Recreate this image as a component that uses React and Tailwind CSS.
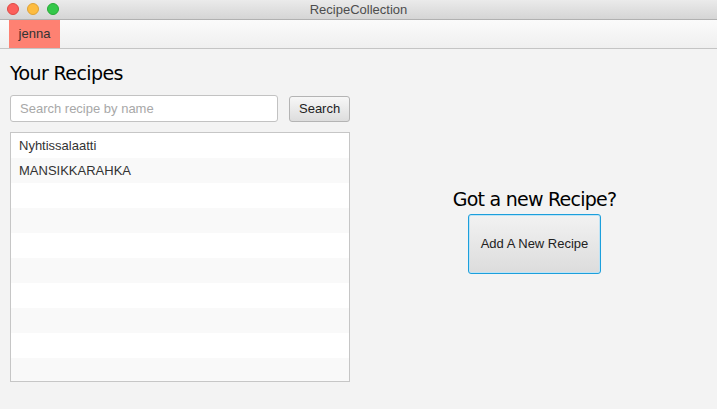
import React from 'react';

const recipes = ['Nyhtissalaatti', 'MANSIKKARAHKA'];

export default function App() {
  const rows = Array.from({ length: 10 }, (_, i) => recipes[i] || '');

  return (
    <div className="w-[717px] h-[409px] bg-[#f3f3f3] flex flex-col overflow-hidden font-['Liberation_Sans',Arial,sans-serif]">
      {/* Title bar */}
      <div className="relative h-[20px] flex items-center justify-center bg-gradient-to-b from-[#ebebeb] to-[#d5d5d5] border-b border-[#b1b1b1]">
        <div className="absolute left-[7px] top-[3px] flex gap-[8px]">
          <span className="w-[12px] h-[12px] rounded-full bg-[#fc605c] border border-[#de4a44]" />
          <span className="w-[12px] h-[12px] rounded-full bg-[#fdbc40] border border-[#dea236]" />
          <span className="w-[12px] h-[12px] rounded-full bg-[#34c84a] border border-[#27aa36]" />
        </div>
        <span className="text-[13px] text-[#4d4d4d] leading-none">RecipeCollection</span>
      </div>

      {/* Menu bar */}
      <div className="h-[29px] flex bg-gradient-to-b from-[#fbfbfb] to-[#efefef] border-b border-[#c4c4c4] pl-[9px]">
        <div className="w-[51px] bg-[#fe8172] flex items-center justify-center text-[13px] text-[#333]">jenna</div>
      </div>

      {/* Content */}
      <div className="flex-1 flex">
        <div className="w-[350px] pl-[10px] pt-[12px] flex flex-col">
          <h1 className="text-[19px] leading-[24px] text-black font-['DejaVu_Sans',sans-serif] tracking-[-0.6px]">Your Recipes</h1>
          <div className="flex items-center mt-[10px] gap-[11px]">
            <input
              type="text"
              placeholder="Search recipe by name"
              className="w-[269px] h-[27px] px-[9px] bg-white border border-[#c2c2c2] rounded-[3px] text-[13px] text-[#333] placeholder:text-[#a8a8a8] outline-none"
            />
            <button className="w-[61px] h-[26px] rounded-[3px] border border-[#b4b4b4] bg-gradient-to-b from-[#f7f7f7] to-[#dddddd] text-[13px] text-[#222]">
              Search
            </button>
          </div>
          <div className="mt-[10px] w-[340px] h-[250px] border border-[#c6c6c6] bg-white overflow-hidden flex flex-col">
            {rows.map((r, i) => (
              <div
                key={i}
                className={`h-[25px] shrink-0 flex items-center pl-[8px] text-[13px] text-[#333] ${i % 2 === 1 ? 'bg-[#f9f9f9]' : 'bg-white'}`}
              >
                {r}
              </div>
            ))}
          </div>
        </div>

        <div className="flex-1 flex flex-col items-center justify-center pl-[2px] pt-[2px]">
          <div className="text-[19px] leading-[24px] text-black font-['DejaVu_Sans',sans-serif] tracking-[-0.75px]">Got a new Recipe?</div>
          <button className="mt-[3px] w-[133px] h-[60px] rounded-[3px] border border-[#1b9fdc] ring-1 ring-inset ring-[#bfe3f5] bg-gradient-to-b from-[#f2f2f2] to-[#dcdcdc] text-[13px] text-[#222]">
            Add A New Recipe
          </button>
        </div>
      </div>
    </div>
  );
}
